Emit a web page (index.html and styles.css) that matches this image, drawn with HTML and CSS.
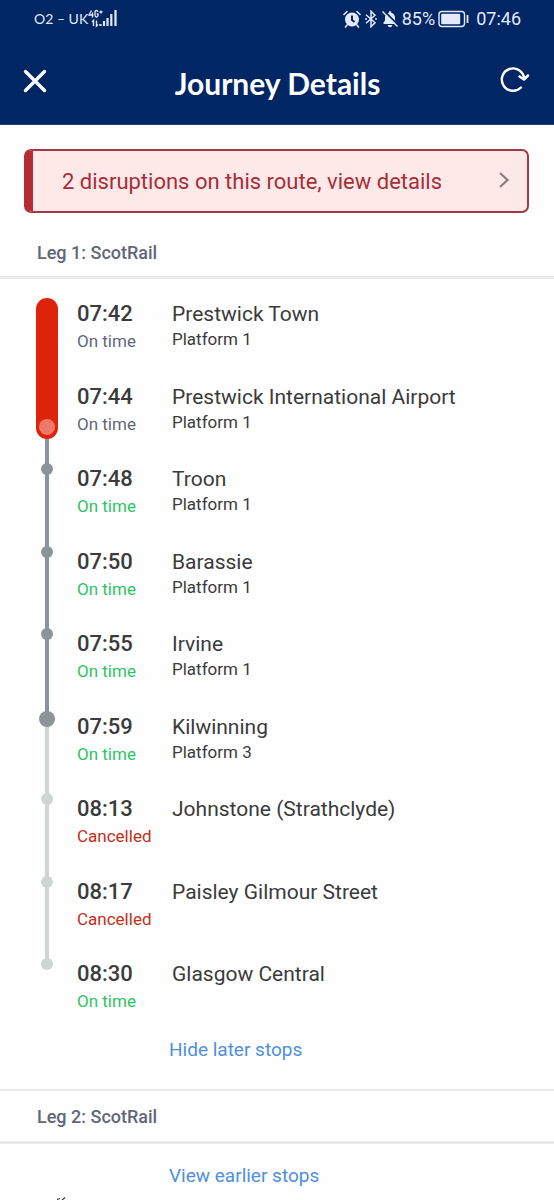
FILE: index.html
```html
<!DOCTYPE html>
<html lang="en">
<head>
<meta charset="utf-8">
<meta name="viewport" content="width=device-width, initial-scale=1">
<title>Journey Details</title>
<link rel="stylesheet" href="styles.css">
</head>
<body>
<header class="top">
  <div class="status">
    <div class="status-group">
      <span>O2 – UK</span>
      <svg class="signal" width="30" height="20" viewBox="0 0 30 20" fill="none" stroke="currentColor" aria-hidden="true">
        <path d="M3.500 1.500 1 6h4.500M4.500 3.500v5M10 3q-.5-1.500-1.500-1.500Q7 1.500 7 3.500v2.500Q7 8 8.500 8T10 6.500V5H8.700M11.500 3h3M13 1.500v3" stroke-width="1.300"/>
        <path d="M4 13 5.500 11.500V17M8.500 11.500V17l1.500-1.500" stroke-width="1.400"/>
        <path d="M12.500 17v-2M16 17v-5M19.500 17V9M23.300 17V5M27.500 17V1" stroke-width="2.200"/>
      </svg>
    </div>
    <div class="status-group status-right">
      <svg width="18" height="18" viewBox="0 0 18 18" aria-hidden="true">
        <circle cx="9" cy="9.500" r="7" fill="currentColor"/>
        <path d="M1 4.500 4 1.500M17 4.500 14 1.500M4 15l-1.500 2M14 15l1.500 2" stroke="currentColor" stroke-width="1.600" stroke-linecap="round"/>
        <path class="cut" d="M9 5.500v4.500l2.500 2"/>
      </svg>
      <svg width="14" height="18" viewBox="0 0 14 18" fill="none" stroke="currentColor" stroke-width="1.500" aria-hidden="true">
        <path d="M2 4.800 11 12.800 7 16.800V1.200L11 5.200 2 13.200"/>
        <path d="M1.300 9h1.400M11.300 9h1.400" stroke-width="1.800"/>
      </svg>
      <svg width="18" height="18" viewBox="0 0 18 18" aria-hidden="true">
        <path d="M2.500 14V12.500l1.500-2V7Q4.500 3.500 8 2.500V1.200h2v1.300Q13.500 3.500 14 7v3.500l1.500 2V14ZM6.500 15h5q-.5 2.300-2.500 2.300T6.500 15Z" fill="currentColor"/>
        <path class="cut" d="M3 1l14 14"/>
        <path d="M1.500 1.500 16.500 16.500" stroke="currentColor" stroke-width="1.500"/>
      </svg>
      <span>85%</span>
      <svg width="31" height="18" viewBox="0 0 31 18" aria-hidden="true">
        <rect x="1" y="1.500" width="25.500" height="15" rx="3" fill="none" stroke="currentColor" stroke-width="1.400"/>
        <rect x="3.200" y="3.700" width="19" height="10.600" rx="1" fill="currentColor"/>
        <path d="M29.500 5v8" stroke="currentColor" stroke-width="1.800"/>
      </svg>
      <time class="clock">07:46</time>
    </div>
  </div>
  <div class="bar">
    <button class="icon-btn" type="button" aria-label="Close">
      <svg width="26" height="26" viewBox="0 0 26 26" fill="none" stroke="currentColor" stroke-width="3.400" stroke-linecap="round"><path d="M3.500 3.500l19 19M22.500 3.500l-19 19"/></svg>
    </button>
    <h1 class="title">Journey Details</h1>
    <button class="icon-btn refresh" type="button" aria-label="Refresh">
      <svg width="30" height="28" viewBox="0 0 30 28" fill="none" stroke="currentColor" stroke-width="2.400" stroke-linecap="round" stroke-linejoin="round"><path d="M24.200 13.500A11.200 11.200 0 1 0 21 22.500"/><path d="M19.500 11.500l4.500 3 4-4" stroke-width="2.500"/></svg>
    </button>
  </div>
</header>
<main>
  <button class="alert" type="button">
    <span>2 disruptions on this route, view details</span>
    <svg width="12" height="18" viewBox="0 0 12 18" fill="none" stroke="currentColor" stroke-width="2.200" aria-hidden="true"><path d="M2 2l7.500 7L2 16"/></svg>
  </button>
  <section>
    <h2 class="leg">Leg 1: ScotRail</h2>
    <ol class="stops">
      <li class="stop"><div class="rail"><span class="train"></span></div><div><time class="time">07:42</time><p class="state">On time</p></div><div><h3 class="name">Prestwick Town</h3><p class="platform">Platform 1</p></div></li>
      <li class="stop"><div class="rail rail-on"></div><div><time class="time">07:44</time><p class="state">On time</p></div><div><h3 class="name">Prestwick International Airport</h3><p class="platform">Platform 1</p></div></li>
      <li class="stop"><div class="rail rail-on"><span class="dot"></span></div><div><time class="time">07:48</time><p class="state good">On time</p></div><div><h3 class="name">Troon</h3><p class="platform">Platform 1</p></div></li>
      <li class="stop"><div class="rail rail-on"><span class="dot"></span></div><div><time class="time">07:50</time><p class="state good">On time</p></div><div><h3 class="name">Barassie</h3><p class="platform">Platform 1</p></div></li>
      <li class="stop"><div class="rail rail-on"><span class="dot"></span></div><div><time class="time">07:55</time><p class="state good">On time</p></div><div><h3 class="name">Irvine</h3><p class="platform">Platform 1</p></div></li>
      <li class="stop"><div class="rail rail-off"><span class="dot dot-big"></span></div><div><time class="time">07:59</time><p class="state good">On time</p></div><div><h3 class="name">Kilwinning</h3><p class="platform">Platform 3</p></div></li>
      <li class="stop"><div class="rail rail-off"><span class="dot dot-off"></span></div><div><time class="time">08:13</time><p class="state bad">Cancelled</p></div><div><h3 class="name">Johnstone (Strathclyde)</h3></div></li>
      <li class="stop"><div class="rail rail-off"><span class="dot dot-off"></span></div><div><time class="time">08:17</time><p class="state bad">Cancelled</p></div><div><h3 class="name">Paisley Gilmour Street</h3></div></li>
      <li class="stop"><div class="rail"><span class="dot dot-off"></span></div><div><time class="time">08:30</time><p class="state good">On time</p></div><div><h3 class="name">Glasgow Central</h3></div></li>
    </ol>
    <button class="more" type="button">Hide later stops</button>
  </section>
  <section class="next">
    <h2 class="leg leg-next">Leg 2: ScotRail</h2>
    <button class="more more-top" type="button">View earlier stops</button>
    <svg class="peek" width="12" height="3" viewBox="0 0 12 3" fill="none" stroke="currentColor" aria-hidden="true"><path d="M1 2.500l3-1M6 3l3-2.500" stroke-width="1.200"/></svg>
  </section>
</main>
</body>
</html>
```
FILE: styles.css
```css
* { box-sizing: border-box; }
body, h1, h2, h3, p, ol { margin: 0; padding: 0; font-weight: 400; }
body { background: #fefefe; color: #3b3b3b; font-family: Roboto, sans-serif; overflow-x: hidden; }
button { border: 0; padding: 0; background: none; font: inherit; color: inherit; cursor: pointer; }
svg { display: block; flex: none; }

.top { background: #002664; color: #fff; height: 125px; border-bottom: 1px solid #24427a; }
.status { display: flex; justify-content: space-between; padding: 7px 33px 0 34px; height: 38px; color: #e4eafa; line-height: 24px; }
.status-group { display: flex; align-items: center; height: 24px; font-family: Lato, sans-serif; font-size: 14px; }
.status-right { gap: 3px; font-family: Roboto, sans-serif; font-size: 18px; }
.clock { margin-left: 4px; }
.cut { fill: none; stroke: #002664; stroke-width: 2; }
.bar { display: grid; grid-template-columns: 30px 1fr 30px; align-items: center; padding: 0 24px 0 20px; height: 86px; }
.icon-btn { display: flex; justify-content: center; align-items: center; }
.refresh { padding-bottom: 5px; }
.title { font-family: Lato, sans-serif; font-weight: 700; font-size: 30px; line-height: 36px; padding: 4px 0 0 5px; text-align: center; }

.alert { display: flex; align-items: center; justify-content: space-between; width: calc(100% - 49px); margin: 24px 25px 0 24px; height: 64px; padding: 2px 17px 0 29px; border: 2px solid #a23844; border-left: 9px solid #b52b36; border-radius: 7px; background: #fee9e9; color: #a92d37; font-size: 22px; line-height: 28px; text-align: left; }
.alert svg { color: #8a7d7d; margin-bottom: 4px; }

.leg { height: 66px; padding: 27px 37px 0; border-bottom: 3px solid #e9e9e9; color: #5e6878; font-weight: 500; font-size: 18px; line-height: 26px; }
.leg-next { height: 53px; padding-top: 13px; }
.next { border-top: 2px solid #e9e9e9; }

.stops { display: grid; grid-auto-rows: 1fr; min-height: 743px; margin-top: 20px; list-style: none; }
.stop { display: grid; grid-template-columns: 20px 95px 1fr; padding: 0 37px; }
.stop > div + div { padding-left: 20px; }
.time, .name { display: block; line-height: 30px; }
.time { font-size: 22px; font-weight: 500; }
.name { font-size: 21px; }
.state { font-size: 17px; line-height: 24px; color: #5e6878; }
.good { color: #2fc463; }
.bad { color: #c22f20; }
.platform { font-size: 17px; line-height: 21px; }

.rail { position: relative; }
.rail-on::before, .rail-off::before { content: ""; position: absolute; left: 8px; top: 5px; width: 4px; height: 100%; background: #8a9499; }
.rail-off::before { background: #d1d4d4; }
.dot { position: absolute; z-index: 1; left: 4px; top: -1px; width: 12px; height: 12px; border-radius: 50%; background: #8a9499; }
.dot-big { left: 2px; top: -1px; width: 16px; height: 16px; }
.dot-off { background: #d1d4d4; }
.train { position: absolute; z-index: 2; left: -1px; top: -1px; width: 22px; height: 141px; border-radius: 11px; background: #df230b; }
.train::after { content: ""; position: absolute; left: 3px; bottom: 4px; width: 16px; height: 16px; border-radius: 50%; background: #f07869; }

.more { display: block; margin: -6px 0 25px 169px; color: #4e90df; font-size: 19px; line-height: 28px; }
.more-top { margin: 18px 0 0 169px; }
.peek { margin: 7px 0 0 56px; }
```
